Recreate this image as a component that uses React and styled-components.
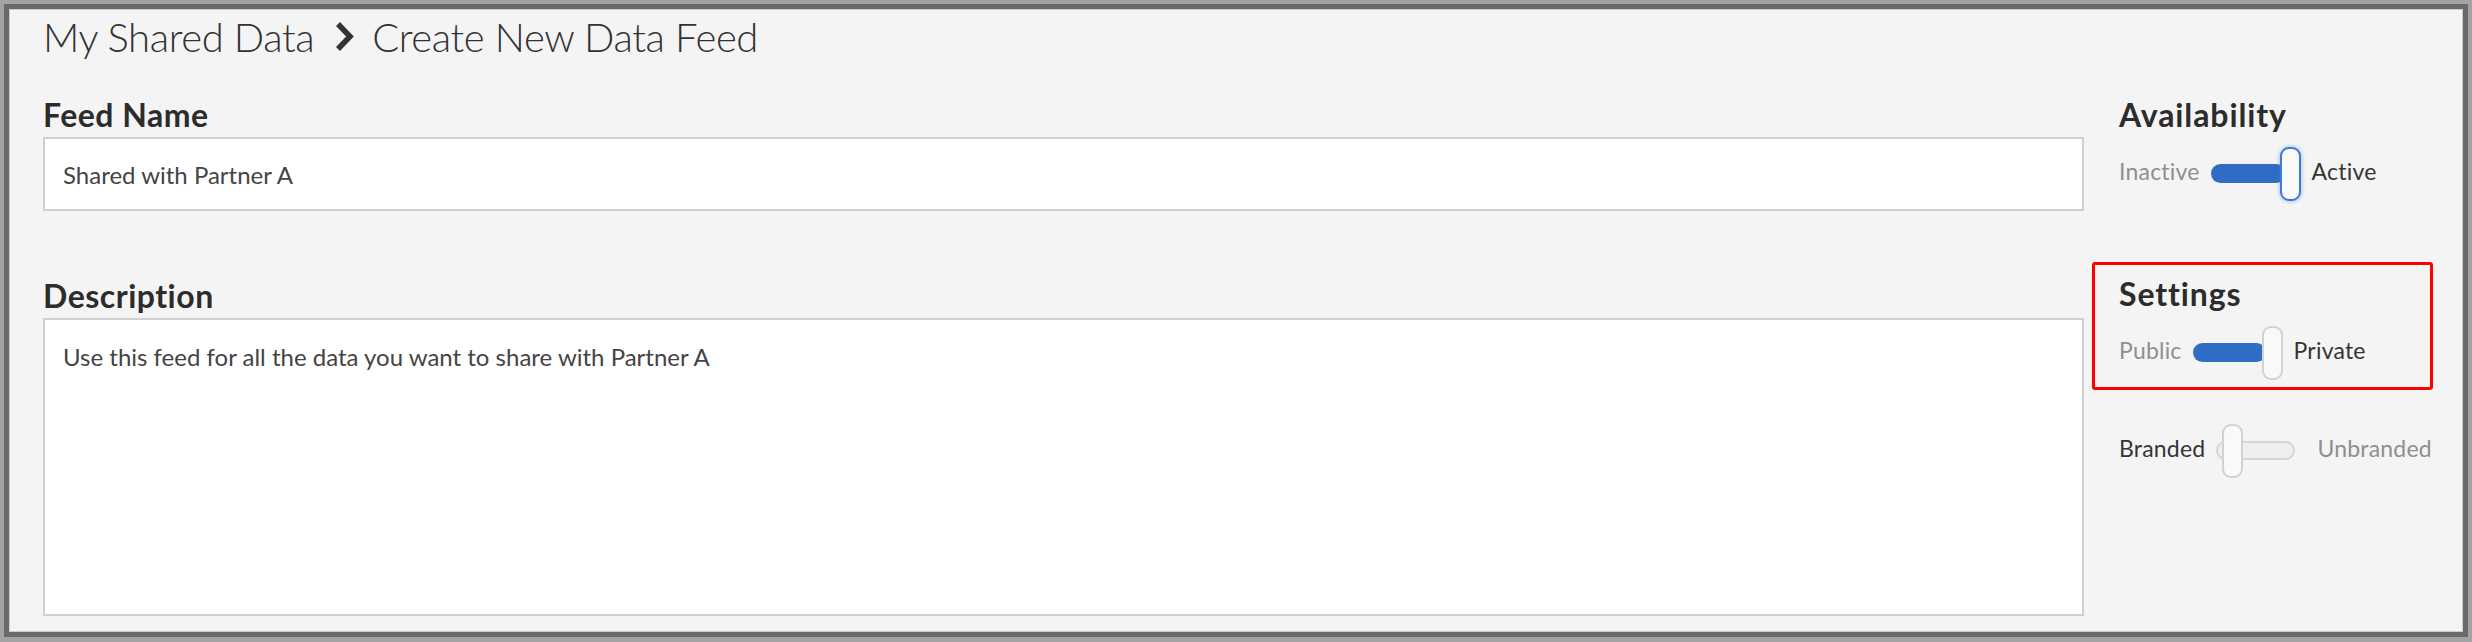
import React from "react";
import styled, { createGlobalStyle } from "styled-components";

const GlobalStyle = createGlobalStyle`
    html, body {
        margin: 0;
        background-color: #a3a3a3;
    }
    * {
        box-sizing: border-box;
    }
`

const Page = styled.div`
    width: 2472px;
    height: 642px;
    padding: 4px 4px 5px 4px;
    font-family: Lato, "Open Sans", sans-serif;
`

// 바깥 어두운 테두리 + 안쪽 밝은 선
const Frame = styled.div`
    height: 633px;
    display: flex;
    flex-direction: column;
    background-color: #f4f4f4;
    border: 5px solid #6a6a6a;
    box-shadow: inset 0 0 0 1px #cdcdcd;
    padding: 4px 30px 16px 34px;
`

const Breadcrumb = styled.div`
    display: flex;
    align-items: center;
    height: 48px;
    font-size: 40px;
    line-height: 48px;
    font-weight: 300;
    letter-spacing: -0.4px;
    color: #323232;
`

const Chevron = styled.svg`
    width: 22px;
    height: 32px;
    margin: 0 16px 0 20px;
    flex-shrink: 0;
`

const Body = styled.div`
    flex: 1;
    min-height: 0;
    margin-top: 35px;
    display: grid;
    grid-template-columns: 1fr 341px;
    column-gap: 8px;
`

const MainColumn = styled.div`
    display: flex;
    flex-direction: column;
`

const FieldLabel = styled.div`
    font-size: 32px;
    line-height: 38px;
    font-weight: 700;
    letter-spacing: ${props => props.$wide ? 0.9 : 0.5}px;
    color: #2c2c2c;
    margin-top: ${props => props.$mt || 0}px;
`

const TextInput = styled.input`
    display: block;
    width: 100%;
    height: 74px;
    margin-top: 3px;
    padding: 0 18px;
    border: 2px solid #d0d0d0;
    border-radius: 0;
    background-color: white;
    font-family: Lato, sans-serif;
    font-size: 24px;
    color: #444;
    outline: none;
`

const TextArea = styled.textarea`
    display: block;
    flex: 1;
    width: 100%;
    margin-top: 3px;
    padding: 22px 18px;
    border: 2px solid #d0d0d0;
    border-radius: 0;
    background-color: white;
    font-family: Lato, sans-serif;
    font-size: 24px;
    line-height: 30px;
    color: #444;
    resize: none;
    outline: none;
`

const SideColumn = styled.div`
    display: flex;
    flex-direction: column;
    margin-top: -13px;
`

const SideSection = styled.div`
    border: 3px solid ${props => props.$highlight ? "#ff0000" : "transparent"};
    border-radius: 3px;
    padding: 10px 24px 7px 24px;
    margin-top: ${props => props.$mt || 0}px;
`

const ToggleRow = styled.div`
    display: flex;
    align-items: center;
    gap: 11px;
    margin-top: ${props => props.$noLabel ? 0 : 13}px;
    height: 54px;
`

const ToggleText = styled.span`
    font-size: 23px;
    line-height: 26px;
    padding-bottom: 7px;
    letter-spacing: 0.2px;
    color: ${props => props.$selected ? "#353535" : "#8f8f8f"};
    white-space: nowrap;
`

const SwitchBox = styled.div`
    position: relative;
    width: 90px;
    height: 54px;
    flex-shrink: 0;
`

const SwitchTrack = styled.div`
    position: absolute;
    left: 0;
    top: 17px;
    width: ${props => props.$width}px;
    height: 19px;
    border-radius: 10px;
    background-color: ${props => props.$on ? "#2f6cc6" : "#efefef"};
    border: ${props => props.$on ? "none" : "2px solid #d6d6d6"};
`

const SwitchThumb = styled.div`
    position: absolute;
    top: 0;
    left: ${props => props.$on ? 69 : 6}px;
    width: 21px;
    height: 54px;
    border-radius: 9px;
    background-color: #f9f9f9;
    border: 2px solid ${props => props.$focus ? "#3c7bd8" : "#d2d2d2"};
    box-shadow: ${props => props.$focus ? "0 0 4px rgba(60, 123, 216, 0.55)" : "none"};
`

const Toggle = ({ off, on, value, trackWidth = 76, focus, noLabel }) => {
    return (
        <ToggleRow $noLabel={noLabel}>
            <ToggleText $selected={!value}>{off}</ToggleText>
            <SwitchBox>
                <SwitchTrack $on={value} $width={trackWidth} />
                <SwitchThumb $on={value} $focus={focus} />
            </SwitchBox>
            <ToggleText $selected={value}>{on}</ToggleText>
        </ToggleRow>
    )
}

const App = () => {
    return (
        <Page>
            <GlobalStyle />
            <Frame>
                <Breadcrumb>
                    <span>My Shared Data</span>
                    <Chevron viewBox="0 0 22 32">
                        <polyline points="4,3 16,15.5 4,28" fill="none" stroke="#333" strokeWidth="5.5" />
                    </Chevron>
                    <span>Create New Data Feed</span>
                </Breadcrumb>
                <Body>
                    <MainColumn>
                        <FieldLabel>Feed Name</FieldLabel>
                        <TextInput readOnly defaultValue="Shared with Partner A" />
                        <FieldLabel $mt={66}>Description</FieldLabel>
                        <TextArea readOnly defaultValue="Use this feed for all the data you want to share with Partner A" />
                    </MainColumn>
                    <SideColumn>
                        <SideSection>
                            <FieldLabel $wide>Availability</FieldLabel>
                            <Toggle off="Inactive" on="Active" value={true} trackWidth={75} focus />
                        </SideSection>
                        <SideSection $highlight $mt={51}>
                            <FieldLabel $wide>Settings</FieldLabel>
                            <Toggle off="Public" on="Private" value={true} trackWidth={73} />
                        </SideSection>
                        <SideSection $mt={21}>
                            <Toggle off="Branded" on="Unbranded" value={false} trackWidth={79} noLabel />
                        </SideSection>
                    </SideColumn>
                </Body>
            </Frame>
        </Page>
    )
}

export default App;
